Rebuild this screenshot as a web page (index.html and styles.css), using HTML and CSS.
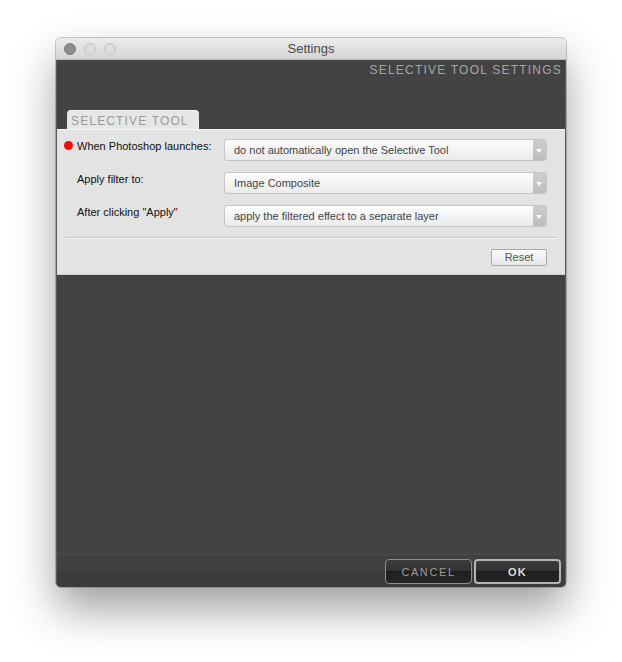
FILE: index.html
```html
<!DOCTYPE html>
<html>
<head>
<meta charset="utf-8">
<title>Settings</title>
<link rel="stylesheet" href="styles.css">
</head>
<body>
<div class="window">
  <div class="titlebar">
    <div class="lights">
      <span class="light light-dark"></span>
      <span class="light"></span>
      <span class="light"></span>
    </div>
    <div class="title">Settings</div>
  </div>
  <div class="main">
    <div class="header">SELECTIVE TOOL SETTINGS</div>
    <div class="tabs">
      <div class="tab">SELECTIVE TOOL</div>
    </div>
    <div class="panel">
      <div class="rows">
        <div class="row">
          <span class="dot"></span>
          <span class="label">When Photoshop launches:</span>
          <div class="select"><span class="select-text">do not automatically open the Selective Tool</span><span class="arrow"></span></div>
        </div>
        <div class="row">
          <span class="dot dot-none"></span>
          <span class="label">Apply filter to:</span>
          <div class="select"><span class="select-text">Image Composite</span><span class="arrow"></span></div>
        </div>
        <div class="row">
          <span class="dot dot-none"></span>
          <span class="label">After clicking "Apply"</span>
          <div class="select"><span class="select-text">apply the filtered effect to a separate layer</span><span class="arrow"></span></div>
        </div>
      </div>
      <div class="separator"></div>
      <div class="panel-actions">
        <button class="reset">Reset</button>
      </div>
    </div>
    <div class="spacer"></div>
    <div class="footer">
      <button class="fbtn cancel">CANCEL</button>
      <button class="fbtn ok">OK</button>
    </div>
  </div>
</div>
</body>
</html>
```

FILE: styles.css
```css
html, body {
  margin: 0;
  padding: 0;
  background: #ffffff;
}
body {
  padding: 38px 0 75px 56px;
  min-height: 662px;
  box-sizing: border-box;
  font-family: "Liberation Sans", Arial, sans-serif;
}
.window {
  width: 510px;
  height: 549px;
  border-radius: 5px;
  overflow: hidden;
  display: flex;
  flex-direction: column;
  box-shadow: 0 22px 44px rgba(0,0,0,0.38), 0 0 0 1px rgba(0,0,0,0.2);
}
.titlebar {
  height: 22px;
  flex: 0 0 22px;
  box-sizing: border-box;
  background: linear-gradient(#ececec, #d5d5d5);
  border-bottom: 1px solid #b9b9b9;
  display: flex;
  align-items: center;
  position: relative;
}
.lights {
  display: flex;
  gap: 8px;
  padding-left: 8px;
}
.light {
  width: 12px;
  height: 12px;
  box-sizing: border-box;
  border-radius: 50%;
  background: #dcdcdc;
  border: 1px solid #c4c4c4;
}
.light-dark {
  background: #8d8d8d;
  border-color: #7c7c7c;
}
.title {
  position: absolute;
  left: 0;
  right: 0;
  top: 0;
  bottom: 0;
  text-align: center;
  line-height: 22px;
  font-size: 13px;
  color: #4a4a4a;
  pointer-events: none;
}
.main {
  flex: 1;
  background: #434343;
  display: flex;
  flex-direction: column;
  border-left: 1px solid #5a5a5a;
  border-right: 1px solid #5a5a5a;
}
.header {
  height: 50px;
  box-sizing: border-box;
  padding: 3px 3px 0 0;
  text-align: right;
  font-size: 12px;
  line-height: 14px;
  letter-spacing: 1.22px;
  color: #a6a6a6;
}
.tabs {
  display: flex;
  padding-left: 10px;
}
.tab {
  width: 132px;
  height: 19px;
  box-sizing: border-box;
  background: #e6e6e6;
  border-top: 1px solid #f4f4f4;
  border-radius: 4px 4px 0 0;
  padding: 3px 0 0 4px;
  font-size: 12px;
  line-height: 14px;
  letter-spacing: 1.15px;
  color: #9a9a9a;
}
.panel {
  height: 146px;
  box-sizing: border-box;
  background: #e3e3e3;
  border-top: 1px solid #f3f3f3;
  border-bottom: 1px solid #cfcfcf;
  display: flex;
  flex-direction: column;
}
.rows {
  display: flex;
  flex-direction: column;
  gap: 11px;
  padding: 9px 18px 0 7px;
}
.row {
  display: flex;
  align-items: flex-start;
  height: 22px;
}
.dot {
  width: 9px;
  height: 9px;
  margin-top: 2px;
  border-radius: 50%;
  background: #f20d0d;
  flex: 0 0 9px;
}
.dot-none {
  background: transparent;
}
.label {
  width: 147px;
  flex: 0 0 147px;
  margin-left: 4px;
  padding-top: 1px;
  font-size: 11px;
  line-height: 13px;
  color: #111111;
}
.select {
  flex: 1;
  height: 22px;
  box-sizing: border-box;
  border: 1px solid #c5c5c5;
  border-radius: 3px;
  background: linear-gradient(#fdfdfd, #ebebeb);
  display: flex;
  align-items: stretch;
  overflow: hidden;
}
.select-text {
  flex: 1;
  padding-left: 9px;
  font-size: 11px;
  line-height: 21px;
  color: #444444;
  white-space: nowrap;
}
.arrow {
  width: 13px;
  flex: 0 0 13px;
  background: linear-gradient(#cdcdcd, #bdbdbd);
  position: relative;
}
.arrow::after {
  content: "";
  position: absolute;
  left: 3px;
  top: 9px;
  border-left: 3.5px solid transparent;
  border-right: 3.5px solid transparent;
  border-top: 4px solid #ffffff;
}
.separator {
  margin: 10px 8px 0 8px;
  height: 1px;
  background: #c9c9c9;
  border-bottom: 1px solid #f7f7f7;
}
.panel-actions {
  display: flex;
  justify-content: flex-end;
  padding: 10px 18px 0 0;
}
.reset {
  width: 56px;
  height: 17px;
  box-sizing: border-box;
  padding: 0;
  border: 1px solid #a9a9a9;
  border-radius: 2px;
  background: linear-gradient(#fbfbfb, #e7e7e7);
  font-family: "Liberation Sans", Arial, sans-serif;
  font-size: 11px;
  line-height: 15px;
  color: #555555;
}
.spacer {
  flex: 1;
}
.footer {
  height: 33px;
  box-sizing: border-box;
  border-top: 1px solid #4a4a4a;
  background: linear-gradient(#414141 0, #414141 16px, #3c3c3c 16px, #3c3c3c 100%);
  display: flex;
  justify-content: flex-end;
  align-items: flex-start;
  gap: 2px;
  padding: 4px 4px 0 0;
}
.fbtn {
  height: 25px;
  box-sizing: border-box;
  padding: 0;
  border-radius: 4px;
  background: linear-gradient(#3b3b3b 0, #333333 45%, #1e1e1e 50%, #262626 100%);
  font-family: "Liberation Sans", Arial, sans-serif;
  font-size: 11px;
  line-height: 22px;
}
.cancel {
  width: 87px;
  border: 1px solid #8e8e8e;
  color: #9d9d9d;
  letter-spacing: 1.6px;
}
.ok {
  width: 87px;
  border: 2px solid #b4b4b4;
  color: #dddddd;
  font-weight: bold;
  letter-spacing: 1.2px;
}
```
